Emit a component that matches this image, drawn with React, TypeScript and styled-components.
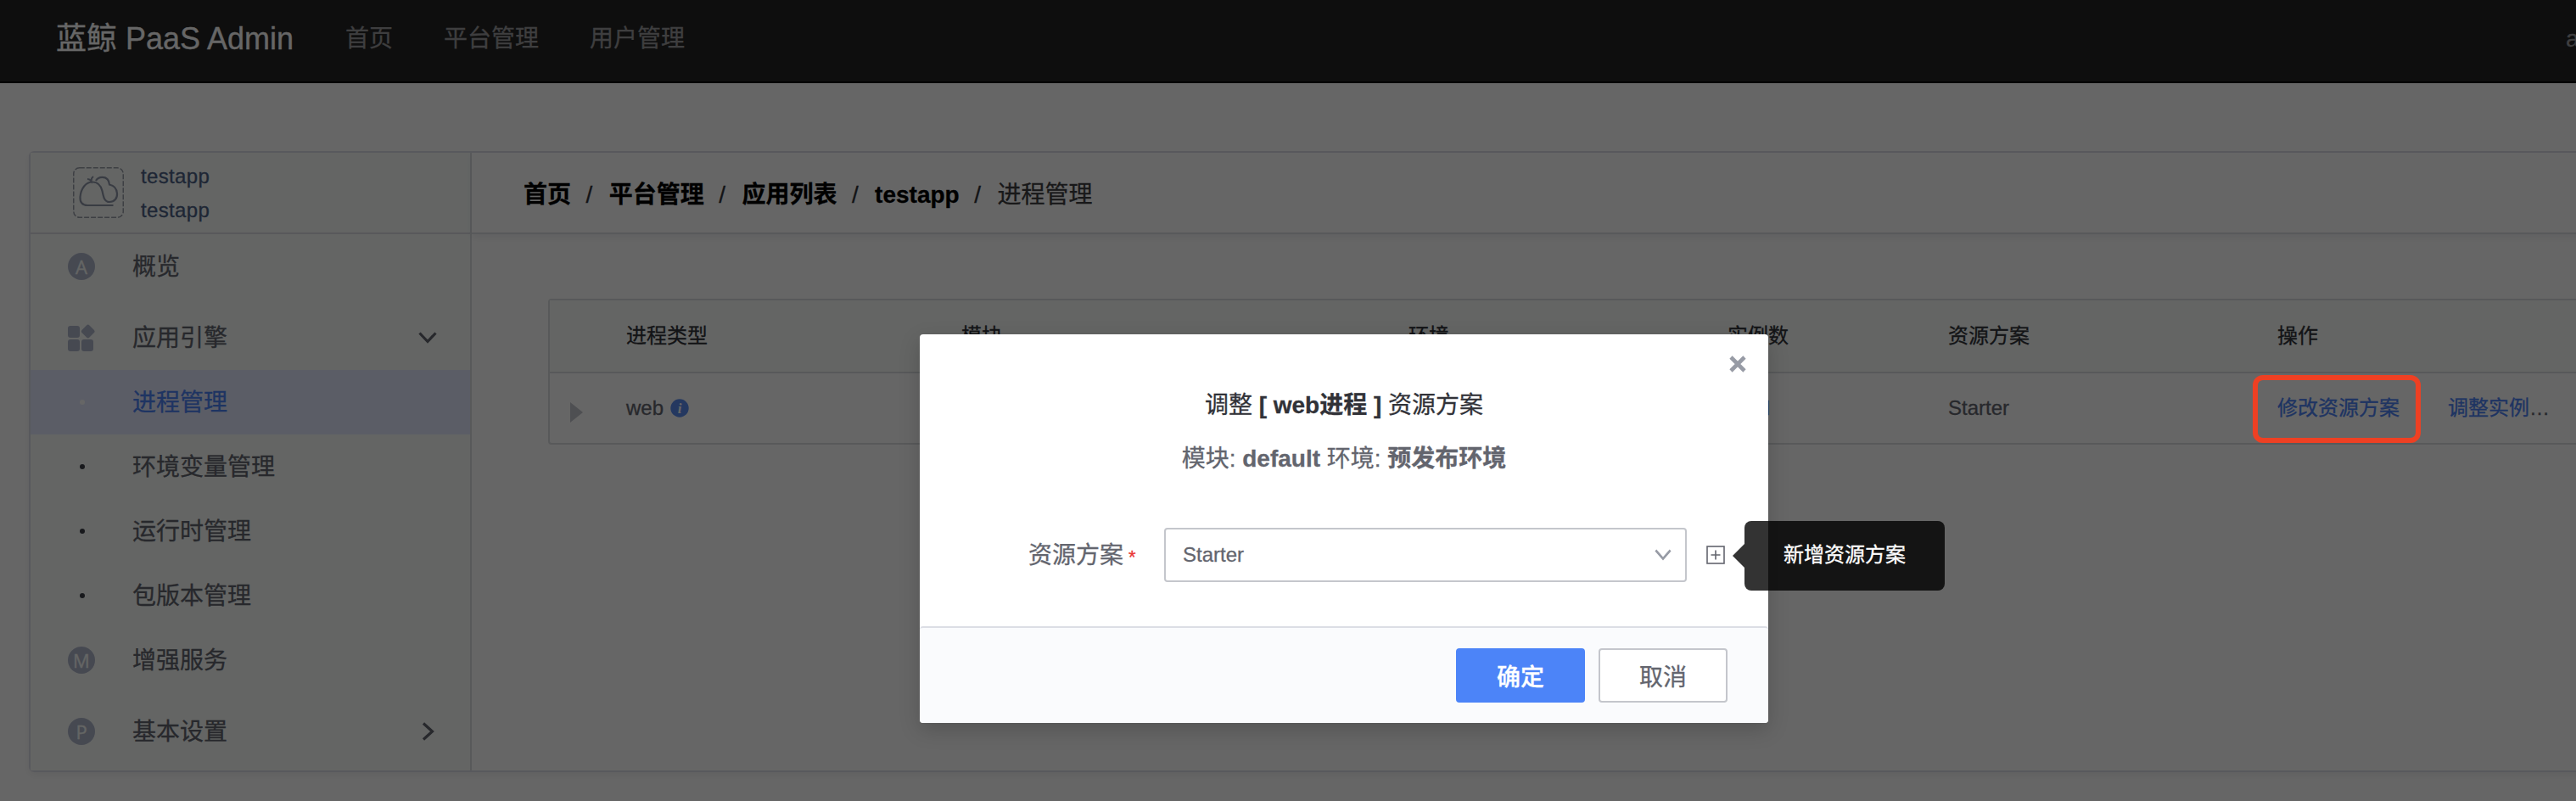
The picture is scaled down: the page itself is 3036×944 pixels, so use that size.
import React from "react";
import styled, { createGlobalStyle } from "styled-components";

const Global = createGlobalStyle`
  *, *::before, *::after { box-sizing: border-box; }
  html, body { margin: 0; padding: 0; background: #fff; overflow: hidden; }
  body {
    font-family: "Liberation Sans", "Noto Sans CJK SC", sans-serif;
    font-size: 24px;
    color: #63656e;
    -webkit-text-stroke: 0.3px currentColor;
  }
`;

const Page = styled.div`
  position: relative;
  width: 3036px;
  height: 944px;
  overflow: hidden;
  background: #fff;
`;

const TopBar = styled.header`
  display: flex;
  align-items: center;
  height: 98px;
  padding: 0 0 4px 66px;
  background: #242424;
  border-bottom: 2px solid #000;
  white-space: nowrap;
`;

const Brand = styled.div`
  width: 341px;
  font-size: 36px;
  line-height: 48px;
  color: #fff;
`;

const TopNav = styled.nav`
  display: flex;
  gap: 60px;
  flex: 1;
`;

const TopLink = styled.a`
  font-size: 28px;
  line-height: 40px;
  color: #9b9b9e;
`;

const UserName = styled(TopLink)`
  width: 12px;
`;

const Shell = styled.div`
  display: flex;
  width: 3100px;
  height: 732px;
  margin: 80px 0 0 34px;
  border: 2px solid #dddee8;
  border-radius: 6px;
  box-shadow: 0 4px 8px rgba(0, 0, 0, 0.05);
`;

const Sidebar = styled.aside`
  width: 520px;
  flex: none;
  background: #f9fdfb;
  border-right: 2px solid #dddfe2;
`;

const AppCard = styled.div`
  display: flex;
  align-items: center;
  gap: 20px;
  height: 96px;
  padding-left: 50px;
  border-bottom: 2px solid #dcdde4;
`;

const AppNames = styled.div`
  display: flex;
  flex-direction: column;
  padding-top: 2px;
  font-size: 24px;
  line-height: 40px;
  letter-spacing: 0.35px;
  color: #4d5f85;
`;

const Item = styled.div<{ $sub?: boolean; $active?: boolean }>`
  display: flex;
  align-items: center;
  height: 76px;
  margin-bottom: ${(p) => (p.$sub ? 0 : 8)}px;
  padding-right: 39px;
  font-size: 28px;
  color: ${(p) => (p.$active ? "#4d82f5" : "#63656e")};
  background: ${(p) => (p.$active ? "#e4e9ff" : "transparent")};
`;

const IconSlot = styled.span`
  display: flex;
  align-items: center;
  justify-content: center;
  width: 120px;
  height: 76px;
`;

const ItemText = styled.span`
  flex: 1;
  padding-top: 2px;
  line-height: 40px;
`;

const Badge = styled.span`
  display: flex;
  align-items: center;
  justify-content: center;
  width: 32px;
  height: 32px;
  border-radius: 50%;
  font-family: "Open Sans", sans-serif;
  font-size: 22px;
  line-height: 32px;
  color: #f9fdfb;
  background: #b0b6cb;
`;

const Dot = styled.span<{ $active?: boolean }>`
  width: 6px;
  height: 6px;
  margin-left: 2px;
  border-radius: 50%;
  background: ${(p) => (p.$active ? "#fff" : "#3c3f48")};
`;

const Main = styled.main`
  flex: 1;
`;

const Crumbs = styled.div`
  display: flex;
  align-items: center;
  height: 96px;
  padding: 6px 0 0 61px;
  font-size: 28px;
  color: #313238;
  border-bottom: 2px solid #dcdfe4;
  box-shadow: 0 4px 8px rgba(0, 20, 50, 0.06);
`;

const Crumb = styled.a<{ $last?: boolean }>`
  line-height: 40px;
  font-weight: ${(p) => (p.$last ? 400 : 700)};
  color: ${(p) => (p.$last ? "#3c3c40" : "#000")};
`;

const Slash = styled.span`
  width: 44.7px;
  padding-right: 2px;
  text-align: center;
`;

const Table = styled.div`
  width: 2600px;
  height: 172px;
  margin: 76px 0 0 90px;
  border: 2px solid #dcdfe1;
  border-radius: 4px;
`;

const TableRow = styled.div<{ $head?: boolean }>`
  display: grid;
  grid-template-columns: 90px 395px 527px 376px 260px 388px 1fr;
  align-items: center;
  height: ${(p) => (p.$head ? 86 : 82)}px;
  line-height: 36px;
  color: ${(p) => (p.$head ? "#313238" : "#63656e")};
  background: ${(p) => (p.$head ? "#f9fdfb" : "transparent")};
  border-bottom: ${(p) => (p.$head ? "2px solid #dcdfe1" : "0")};
`;

const Cell = styled.div`
  display: flex;
  align-items: center;
  gap: 8px;
  white-space: nowrap;
`;

const Expander = styled.span`
  width: 0;
  height: 0;
  margin: 9px 0 0 24px;
  border: 12px solid transparent;
  border-left: 15px solid #c4c6cc;
  border-right: 0;
`;

const Link = styled.a`
  color: #4d82f5;
`;

const Highlighted = styled(Link)`
  position: relative;
  margin-right: 49px;
  &::after {
    content: "";
    position: absolute;
    z-index: 3;
    left: -29px;
    top: -21px;
    width: 198px;
    height: 80px;
    border: 6px solid #ee4023;
    border-radius: 12px;
  }
`;

const Count = styled(Link)`
  margin-left: 40px;
  font-family: Roboto, sans-serif;
`;

const Mask = styled.div`
  position: absolute;
  inset: 0;
  z-index: 2;
  padding: 394px 0 0 1084px;
  background: rgba(0, 0, 0, 0.6);
`;

const Dialog = styled.section`
  position: relative;
  display: flex;
  flex-direction: column;
  width: 1000px;
  height: 458px;
  background: #fff;
  border-radius: 4px;
  box-shadow: 0 8px 24px rgba(0, 0, 0, 0.18);
`;

const Close = styled.svg`
  position: absolute;
  top: 24px;
  right: 25px;
`;

const Title = styled.h3`
  margin: 64px 0 0;
  text-align: center;
  font-size: 28px;
  font-weight: 400;
  line-height: 40px;
  color: #313238;
`;

const Subtitle = styled.p`
  margin: 25px 0 0;
  text-align: center;
  font-size: 28px;
  line-height: 36px;
`;

const Field = styled.div`
  position: relative;
  display: flex;
  align-items: center;
  height: 64px;
  margin-top: 63px;
  padding-left: 128px;
`;

const Label = styled.label`
  display: flex;
  align-items: center;
  width: 160px;
  gap: 6px;
  padding-top: 2px;
  font-size: 28px;
  line-height: 40px;
`;

const Required = styled.span`
  font-size: 22px;
  line-height: 22px;
  padding-top: 4px;
  color: #ea3636;
`;

const Select = styled.div`
  display: flex;
  align-items: center;
  justify-content: space-between;
  width: 616px;
  height: 64px;
  margin-right: 23px;
  padding: 0 16px 0 20px;
  border: 2px solid #c4c6cc;
  border-radius: 4px;
`;

const Starter = styled.span`
  line-height: 36px;
`;

const Tooltip = styled.div`
  position: absolute;
  left: 972px;
  top: -8px;
  width: 236px;
  height: 82px;
  padding-left: 46px;
  font-size: 24px;
  line-height: 80px;
  color: #fff;
  background: rgba(0, 0, 0, 0.8);
  border-radius: 8px;
  white-space: nowrap;
  &::before {
    content: "";
    position: absolute;
    left: -14px;
    top: 27px;
    border: 14px solid transparent;
    border-right-color: rgba(0, 0, 0, 0.8);
    border-left: 0;
  }
`;

const Footer = styled.footer`
  display: flex;
  align-items: center;
  justify-content: flex-end;
  gap: 16px;
  height: 114px;
  margin-top: auto;
  padding-right: 48px;
  background: #fafbfd;
  border-top: 2px solid #dcdee5;
  border-radius: 4px;
`;

const Button = styled.button<{ $primary?: boolean }>`
  width: 152px;
  height: 64px;
  padding: 0;
  font-family: inherit;
  font-size: 28px;
  font-weight: ${(p) => (p.$primary ? 500 : 400)};
  color: ${(p) => (p.$primary ? "#fff" : "#63656e")};
  background: ${(p) => (p.$primary ? "#4c84f8" : "#fff")};
  border: 2px solid ${(p) => (p.$primary ? "#4c84f8" : "#c4c6cc")};
  border-radius: 4px;
`;

const AppLogo = () => (
  <svg width="60" height="60" viewBox="0 0 60 60" fill="none">
    <rect x="0.75" y="0.75" width="58.5" height="58.5" rx="7" stroke="#9a9ea8" strokeWidth="1.5" strokeDasharray="6 2" />
    <path
      d="M47.5 45H17C11 45 8 41 8.500 35C9.500 25 15 17.500 23 17.500C29.500 17.500 33 22 34.500 28C36 35 37 41 43 41C49 41 52.500 36.500 52 31C51.500 25 48 21.500 43 20.500C42.500 15 39.500 11.800 34.500 11.800C31 11.800 28.500 13 27 16"
      stroke="#8f96a8"
      strokeWidth="2.2"
    />
    <path d="M17 14C19 14 20.500 15 21.500 16.500C21.500 14 22.500 12 24 11" stroke="#8f96a8" strokeWidth="2" />
  </svg>
);

const GridIcon = () => (
  <svg width="32" height="32" viewBox="0 0 32 32" fill="#b0b6cb">
    <rect x="0" y="2" width="14" height="14" rx="3" />
    <rect x="0" y="18" width="14" height="14" rx="3" />
    <rect x="16" y="18" width="14" height="14" rx="3" />
    <rect x="17.5" y="2.3" width="12.4" height="12.4" rx="2.5" transform="rotate(45 23.7 8.5)" />
  </svg>
);

const ChevronDown = ({ color, w, width }: { color: string; w: number; width: number }) => (
  <svg width={width} height="14" viewBox="0 0 22 14" fill="none" preserveAspectRatio="none">
    <path d="M1.5 1.5L11 11.5L20.5 1.5" stroke={color} strokeWidth={w} />
  </svg>
);

const ChevronRight = () => (
  <svg width="18" height="22" viewBox="0 0 18 22" fill="none">
    <path d="M2 1.5L12.5 11L2 20.5" stroke="#63656e" strokeWidth="3.2" />
  </svg>
);

const InfoIcon = () => (
  <svg width="22" height="22" viewBox="0 0 22 22">
    <circle cx="11" cy="11" r="10.7" fill="#5a8cf0" stroke="none" />
    <text x="11" y="17" textAnchor="middle" fontFamily="Liberation Serif" fontStyle="italic" fontWeight="700" fontSize="17" fill="#fff">
      i
    </text>
  </svg>
);

const PlusBox = () => (
  <svg width="22" height="22" viewBox="0 0 22 22" fill="none" stroke="#63656e">
    <rect x="1" y="1" width="20" height="20" strokeWidth="1.6" />
    <path d="M5.5 11H16.5M11 5.5V16.5" strokeWidth="1.6" />
  </svg>
);

const crumbs = ["首页", "平台管理", "应用列表", "testapp", "进程管理"];
const subItems = ["进程管理", "环境变量管理", "运行时管理", "包版本管理"];
const columns = ["", "进程类型", "模块", "环境", "实例数", "资源方案", "操作"];

export default function App() {
  return (
    <Page>
      <Global />
      <TopBar>
        <Brand>蓝鲸 PaaS Admin</Brand>
        <TopNav>
          <TopLink>首页</TopLink>
          <TopLink>平台管理</TopLink>
          <TopLink>用户管理</TopLink>
        </TopNav>
        <UserName>admin</UserName>
      </TopBar>

      <Shell>
        <Sidebar>
          <AppCard>
            <AppLogo />
            <AppNames>
              <span>testapp</span>
              <span>testapp</span>
            </AppNames>
          </AppCard>
          <Item>
            <IconSlot><Badge>A</Badge></IconSlot>
            <ItemText>概览</ItemText>
          </Item>
          <Item $sub>
            <IconSlot><GridIcon /></IconSlot>
            <ItemText>应用引擎</ItemText>
            <ChevronDown color="#63656e" w={3.2} width={22} />
          </Item>
          {subItems.map((name, i) => (
            <Item key={name} $sub $active={i === 0}>
              <IconSlot><Dot $active={i === 0} /></IconSlot>
              <ItemText>{name}</ItemText>
            </Item>
          ))}
          <Item>
            <IconSlot><Badge>M</Badge></IconSlot>
            <ItemText>增强服务</ItemText>
          </Item>
          <Item>
            <IconSlot><Badge>P</Badge></IconSlot>
            <ItemText>基本设置</ItemText>
            <ChevronRight />
          </Item>
        </Sidebar>

        <Main>
          <Crumbs>
            {crumbs.map((name, i) => (
              <React.Fragment key={name}>
                {i > 0 && <Slash>/</Slash>}
                <Crumb $last={i === crumbs.length - 1}>{name}</Crumb>
              </React.Fragment>
            ))}
          </Crumbs>
          <Table>
            <TableRow $head>
              {columns.map((name) => (
                <Cell key={name}>{name}</Cell>
              ))}
            </TableRow>
            <TableRow>
              <Cell><Expander /></Cell>
              <Cell>web <InfoIcon /></Cell>
              <Cell />
              <Cell />
              <Cell><Count>1</Count></Cell>
              <Cell><Starter>Starter</Starter></Cell>
              <Cell>
                <Highlighted>修改资源方案</Highlighted>
                <span><Link>调整实例</Link>…</span>
              </Cell>
            </TableRow>
          </Table>
        </Main>
      </Shell>

      <Mask>
        <Dialog>
          <Close width="22" height="22" viewBox="0 0 22 22">
            <path d="M3 3L19 19M19 3L3 19" stroke="#979ba5" strokeWidth="4.6" />
          </Close>
          <Title>调整 <b>[ web进程 ]</b> 资源方案</Title>
          <Subtitle>模块: <b>default</b> 环境: <b>预发布环境</b></Subtitle>
          <Field>
            <Label>资源方案<Required>*</Required></Label>
            <Select>
              <Starter>Starter</Starter>
              <ChevronDown color="#979ba5" w={2.8} width={20} />
            </Select>
            <PlusBox />
            <Tooltip>新增资源方案</Tooltip>
          </Field>
          <Footer>
            <Button $primary>确定</Button>
            <Button>取消</Button>
          </Footer>
        </Dialog>
      </Mask>
    </Page>
  );
}
